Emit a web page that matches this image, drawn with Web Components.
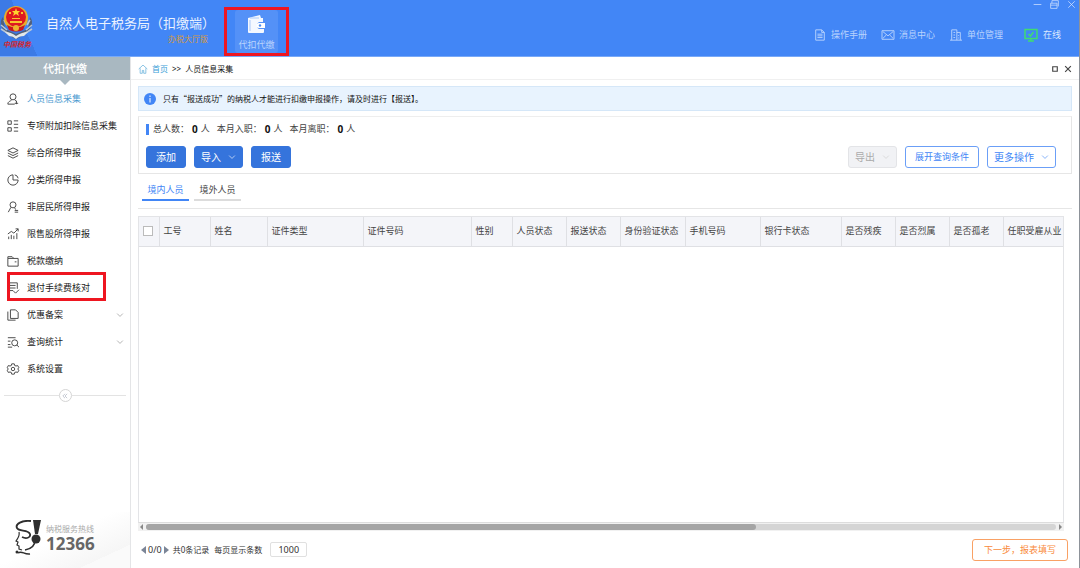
<!DOCTYPE html>
<html lang="zh-CN">
<head>
<meta charset="utf-8">
<title>自然人电子税务局（扣缴端）</title>
<style>
    html, body { height: 100%; margin: 0; }
    body {
        font: 9px/14px "Noto Sans", "Noto Sans CJK SC", sans-serif;
        color: #333;
        background: #fff;
        overflow: hidden;
    }
</style>
</head>
<body>
<tax-app></tax-app>

<script>
const ICONS = {
    person: '<circle cx="7" cy="4.5" r="3.5"/><path d="M5 8C5 10 1 9 1 13h8M9 8l2 2M11 9v4M9 12h4"/>',
    list: '<path d="M1 1h4v4H1zM1 9h4v4H1zM8 1h5M8 5h5M8 9h5M8 13h5"/>',
    layers: '<path d="M7 1l6 3-6 3-6-3zM1 7l6 3 6-3M1 10l6 3 6-3"/>',
    pie: '<path d="M7 1A6 6 0 1 0 13 7H7zM9 1A5 5 0 0 1 13 5"/>',
    foreign: '<circle cx="7" cy="4.5" r="3.5"/><path d="M4.5 7.5L1.5 13M9 8l1 2M9 11h4M9 13h4"/>',
    chart: '<path d="M2 13v-3M5 13V8M8 13V9M11.5 13V6M1 7l4-3 3 2 5-5M10 1h3v3"/>',
    folder: '<path d="M1 4h12v9H1zM1 4V2h5l2 2M9 8h2"/>',
    check: '<path d="M3 1h9v7M3 4h7M3 7h7M3 10h4M1 1h2v12M7 10l3 3 4-4"/>',
    copy: '<path d="M4 1h6l3 3v7H4zM1 3v10h9"/>',
    search: '<path d="M1 2h9M1 6h3M1 10h3M1 13h5"/><circle cx="9" cy="8" r="3.5"/><path d="M11.5 10.5L14 13"/>',
    gear: '<path d="M5.5 1h3l.5 2 1.500.5 2-.5 1.300 2.500L12.500 7l1.300 1.500-1.300 2.500-2-.5L9 11l-.5 2h-3L5 11l-1.500-.5-2 .5L.3 8.500 1.500 7 .3 5.500 1.500 3l2 .5L5 3z"/><circle cx="7" cy="7" r="2"/>',
    home: '<path d="M1 7l6-5.500L13 7M3 6v7h3V9h2v4h3V6"/>',
    doc: '<path d="M2 1h7l3 3v9H2zM9 1v3h3M4 6h6M4 8h6M4 10h6"/>',
    mail: '<path d="M0 2h14v10H0zM1 3l6 5 6-5M1 11l4-4M13 11L9 7"/>',
    building: '<path d="M2 13V1h6v12M8 4h4v9M0 13h14M4 4h2M4 7h2M4 10h2M10 7v1M10 10v1"/>',
    online: '<path d="M1 1.500h12v9H1zM4 13h6M7 11v2M4.500 6l2 2 3-4"/>',
    down: '<path d="M2 4.500l5 5 5-5"/>',
    collapse: '<path d="M7 2L2 7l5 5M12 2L7 7l5 5"/>',
    min: '<path d="M1 7h12"/>',
    restore: '<path d="M1 5h10v8H1zM3 5V1h10v9M1 8h10"/>',
    close: '<path d="M2 2l10 10M12 2L2 12"/>',
    square: '<path d="M3 3h8v8H3z"/>'
};

function define(name, html, setup) {
    customElements.define(name, class extends HTMLElement {
        constructor() {
            super();
            this.attachShadow({ mode: 'open' });
        }
        connectedCallback() {
            this.shadowRoot.innerHTML = typeof html === 'function' ? html(this) : html;
            if (setup) setup(this);
        }
    });
}

define('ui-icon', (el) => `
    <style>
        :host { display: inline-flex; flex: none; width: 12px; height: 12px; }
        svg { width: 100%; height: 100%; fill: none; stroke: currentColor; stroke-width: var(--stroke, 1.1); overflow: visible; }
    </style>
    <svg viewBox="0 0 14 14" aria-hidden="true">${ICONS[el.getAttribute('name')] || ''}</svg>
`);

define('tax-emblem', `
    <style>
        :host { display: flex; flex-direction: column; align-items: center; width: 34px; }
        svg { width: 34px; height: 35px; }
        span { font: italic bold 7px/9px "Noto Sans CJK SC", sans-serif; color: #d3262f; white-space: nowrap; }
    </style>
    <svg viewBox="0 0 34 35" aria-hidden="true">
        <path d="M3 12C-2 18 1 27 16 34C31 27 35 18 30 12L28 24L16 29L5 24z" fill="#51617c"/>
        <path d="M1 20l6 5M1 24l8 5M4 15l3 5M32 20l-6 5M32 24l-8 5M30 15l-3 5" stroke="#b9c6d6" stroke-width="1.5"/>
        <path d="M5 27q6 0 11 4q6-4 12-4l-4 4q-5 0-8 3q-3-3-7-3z" fill="#e3e7e9"/>
        <circle cx="16" cy="13" r="12" fill="#e7ad2c"/>
        <circle cx="16" cy="12" r="10" fill="#df1920"/>
        <path d="M16 3l1 3h3l-2 2 1 3-3-2-3 2 1-3-2-2h3z" fill="#ffd52e"/>
        <path d="M9 7h2v2H9zM21 7h2v2h-2zM12 13h8v1h-8zM10 16h12v2H10z" fill="#f8c52c"/>
        <path d="M7 20q9 5 18 0l-2 5q-7 3-14 0z" fill="#c9171e"/>
        <circle cx="16" cy="23" r="3" fill="#eeb22e"/>
    </svg>
    <span>中国税务</span>
`);

define('app-header', `
    <style>
        :host {
            display: flex; height: 57px; box-sizing: border-box; color: #b9d3fd;
            background: linear-gradient(65deg, #3c7ae6 0 34px, transparent 34px) #4286f6;
            border-bottom: 1px solid #78a9f8;
        }
        tax-emblem { margin-top: 5px; }
        .title { display: flex; flex-direction: column; padding: 13px 0 0 12px; width: 178px; box-sizing: border-box; white-space: nowrap; }
        h1 { margin: 0; font-size: 13px; line-height: 20px; font-weight: normal; color: #eaf2ff; }
        .edition { align-self: flex-end; font-size: 8px; line-height: 12px; color: #d39a3f; margin-right: 4px; }
        .mark { border: 3px solid #ee1620; margin: 7px 0 0 12px; box-sizing: border-box; width: 65px; height: 49px; display: flex; justify-content: center; }
        .tile {
            font: inherit; color: inherit; width: 43px; padding: 5px 0 0; border: 0; border-radius: 3px; background: #5491f7;
            display: flex; flex-direction: column; align-items: center; gap: 5px;
        }
        .tile svg { width: 19px; height: 18px; }
        .right { margin-left: auto; display: flex; flex-direction: column; align-items: flex-end; }
        .window { display: flex; gap: 8px; padding-right: 3px; height: 11px; color: #dce9ff; }
        .window button { border: 0; padding: 0; background: none; color: inherit; display: flex; }
        .window ui-icon { width: 9px; height: 9px; }
        nav { display: flex; gap: 15px; padding: 17px 18px 0 0; }
        a { display: flex; align-items: center; gap: 5px; color: inherit; text-decoration: none; }
        a.online { margin-left: 6px; color: #dce9ff; }
        a.online ui-icon { color: #3fdc72; width: 14px; height: 14px; --stroke: 1.5; }
    </style>
    <tax-emblem></tax-emblem>
    <div class="title">
        <h1>自然人电子税务局（扣缴端）</h1>
        <span class="edition">办税大厅版</span>
    </div>
    <div class="mark">
        <button class="tile">
            <svg viewBox="0 0 19 18" aria-hidden="true">
                <path d="M1 3l12-3 1 3h2v4h-4a4 4 0 0 0 0 7h5v3q0 1-1 1H2q-1 0-1-1z" fill="#f4f8ff"/>
                <path d="M3 3h9M3 5v11" stroke="#a9c8fa" fill="none"/>
                <path d="M12 8h6v5h-6a2.500 2.500 0 0 1 0-5z" fill="#fff"/>
                <circle cx="13" cy="10.500" r="1.200" fill="#4b89ed"/>
            </svg>
            <span>代扣代缴</span>
        </button>
    </div>
    <div class="right">
        <div class="window">
            <button aria-label="最小化"><ui-icon name="min"></ui-icon></button>
            <button aria-label="还原"><ui-icon name="restore"></ui-icon></button>
            <button aria-label="关闭"><ui-icon name="close"></ui-icon></button>
        </div>
        <nav>
            <a href="#"><ui-icon name="doc"></ui-icon>操作手册</a>
            <a href="#"><ui-icon name="mail"></ui-icon>消息中心</a>
            <a href="#"><ui-icon name="building"></ui-icon>单位管理</a>
            <a href="#" class="online"><ui-icon name="online"></ui-icon>在线</a>
        </nav>
    </div>
`);

define('nav-item', (el) => `
    <style>
        :host { display: block; position: relative; color: #222; }
        :host([active]) a { color: #4c9bd0; }
        a { display: flex; align-items: center; gap: 8px; height: 27px; padding: 0 6px 0 7px; color: inherit; text-decoration: none; white-space: nowrap; }
        ui-icon { color: #444; }
        .more { margin-left: auto; width: 8px; height: 8px; color: #888; }
        /* frame drawn over the item */
        :host([marked])::after {
            content: ""; position: absolute; inset: -2px 24px 0 7px; border: 3px solid #ee1620;
        }
    </style>
    <a href="#">
        <ui-icon name="${el.getAttribute('icon')}"></ui-icon>
        <slot></slot>
        ${el.hasAttribute('expandable') ? '<ui-icon class="more" name="down"></ui-icon>' : ''}
    </a>
`);

define('hot-line', `
    <style>
        :host {
            display: flex; align-items: center; gap: 4px; padding: 8px 0 12px 15px;
            background: linear-gradient(155deg, transparent 45%, #f6f6f6 80%, #fafafa 80%);
        }
        svg { width: 27px; height: 36px; }
        div { display: flex; flex-direction: column; color: #aaa; font-size: 8px; line-height: 12px; }
        b { font-size: 17px; line-height: 18px; color: #666; }
    </style>
    <svg viewBox="0 0 27 36" fill="none" stroke="#2e2e2e" aria-hidden="true">
        <path d="M16 1C7 0 0 4 2 8c2 4 11 1 13 6 1 4-4 5-8 3" stroke-width="1.800"/>
        <path d="M4 12c1 4-1 6-3 9l2 1-1 3 2 1v3l3 1" stroke-width="1.200"/>
        <path d="M20 20c0 6-4 9-10 10M3 33c4-3 6 2 12 1" stroke-width="1.500"/>
        <path d="M18 0h8l-3 14h-3z" fill="#2e2e2e" stroke="none"/>
        <circle cx="21" cy="19" r="4.500" fill="#2e2e2e" stroke="none"/>
        <circle cx="2" cy="32" r="1.500" fill="#2e2e2e" stroke="none"/>
    </svg>
    <div><span>纳税服务热线</span><b>12366</b></div>
`);

define('side-nav', `
    <style>
        :host { display: flex; flex-direction: column; width: 131px; flex: none; box-sizing: border-box; border-right: 1px solid #e4e5e7; }
        h2 { margin: 0; height: 23px; font-size: 11px; line-height: 23px; font-weight: 500; text-align: center; color: #fff; background: #a9b8c1; }
        .notch { align-self: center; height: 0; border: 5px solid transparent; border-top-color: #a9b8c1; border-bottom: 0; }
        .fold { display: flex; align-items: center; padding: 7px 4px 0; }
        .fold::before, .fold::after { content: ""; flex: 1; height: 1px; background: #e3e3e3; }
        .fold button { width: 13px; height: 13px; padding: 0; border: 1px solid #d5d5d5; border-radius: 50%; background: #fff; color: #8790a3; display: flex; align-items: center; justify-content: center; }
        .fold ui-icon { width: 6px; height: 6px; }
        hot-line { margin-top: auto; }
    </style>
    <h2>代扣代缴</h2>
    <div class="notch"></div>
    <nav>
        <nav-item icon="person" active>人员信息采集</nav-item>
        <nav-item icon="list">专项附加扣除信息采集</nav-item>
        <nav-item icon="layers">综合所得申报</nav-item>
        <nav-item icon="pie">分类所得申报</nav-item>
        <nav-item icon="foreign">非居民所得申报</nav-item>
        <nav-item icon="chart">限售股所得申报</nav-item>
        <nav-item icon="folder">税款缴纳</nav-item>
        <nav-item icon="check" marked>退付手续费核对</nav-item>
        <nav-item icon="copy" expandable>优惠备案</nav-item>
        <nav-item icon="search" expandable>查询统计</nav-item>
        <nav-item icon="gear">系统设置</nav-item>
    </nav>
    <div class="fold"><button aria-label="收起菜单"><ui-icon name="collapse"></ui-icon></button></div>
    <hot-line></hot-line>
`);

define('crumb-bar', `
    <style>
        :host { display: flex; align-items: center; gap: 4px; height: 20px; padding: 2px 7px 0; border-bottom: 1px solid #f0f0f0; font-size: 8px; color: #111; }
        a { display: flex; align-items: center; gap: 4px; color: #3aa0d8; text-decoration: none; }
        a ui-icon { width: 10px; height: 10px; color: #6db4dc; }
        .tools { margin-left: auto; display: flex; gap: 5px; }
        button { border: 0; padding: 0; background: none; display: flex; color: #444; }
        .tools ui-icon { width: 8px; height: 8px; --stroke: 2; }
    </style>
    <a href="#"><ui-icon name="home"></ui-icon>首页</a>
    <span>&gt;&gt;</span>
    <span>人员信息采集</span>
    <div class="tools">
        <button aria-label="最大化"><ui-icon name="square"></ui-icon></button>
        <button aria-label="关闭"><ui-icon name="close"></ui-icon></button>
    </div>
`);

define('info-notice', `
    <style>
        :host { display: flex; align-items: center; gap: 7px; height: 23px; padding: 0 5px; border: 1px solid #d5e7f8; background: #e8f3fe; font: 8px/14px "Noto Sans CJK SC", sans-serif; color: #111; }
        i { width: 12px; height: 12px; border-radius: 50%; background: #4286f6; flex: none; display: flex; }
        svg { width: 12px; height: 12px; }
    </style>
    <i><svg viewBox="0 0 12 12" stroke="#fff" aria-hidden="true"><path d="M6 2.500v1.500M6 5v4.500"/></svg></i>
    <span><slot></slot></span>
`);

define('ui-button', (el) => `
    <style>
        :host { display: inline-flex; }
        button {
            display: flex; align-items: center; justify-content: center; gap: 7px; height: 22px; padding: 0 9px;
            font: inherit; font-size: 10px; border: 1px solid #3574dc; border-radius: 3px; background: #3574dc; color: #fff; white-space: nowrap;
        }
        ui-icon { width: 8px; height: 8px; }
        :host([kind="outline"]) button { background: #fff; color: #4286f6; border-color: #6b9ff7; }
        :host([kind="accent"]) button { background: #fff; color: #f98a3c; border-color: #f9a165; padding: 0 11px; }
        :host([compact]) button { font-size: 9px; }
        :host([arrow]) button { padding: 0 6px; }
        button:disabled { background: #f1f2f5; color: #aaa; border-color: #e3e4e7; }
        button:disabled ui-icon { color: #ccc; }
    </style>
    <button ${el.hasAttribute('disabled') ? 'disabled' : ''}>
        <slot></slot>
        ${el.hasAttribute('arrow') ? '<ui-icon name="down"></ui-icon>' : ''}
    </button>
`);

define('people-panel', `
    <style>
        :host { display: flex; flex-direction: column; gap: 10px; border: 1px solid #e6e6e6; border-top-color: #eee; padding: 5px 15px 5px 7px; }
        .stats { display: flex; align-items: center; gap: 7px; color: #444; }
        .stats::before { content: ""; width: 3px; height: 11px; background: #4286f6; margin-right: -3px; }
        .stats span { display: flex; gap: 3px; font-family: "Noto Sans CJK SC", sans-serif; }
        b { font-family: "Noto Sans", sans-serif; font-size: 10px; color: #111; }
        .actions { display: flex; gap: 8px; }
        .push { margin-left: auto; }
    </style>
    <div class="stats">
        <span>总人数：<b>0</b>人</span>
        <span>本月入职：<b>0</b>人</span>
        <span>本月离职：<b>0</b>人</span>
    </div>
    <div class="actions">
        <ui-button>添加</ui-button>
        <ui-button arrow>导入</ui-button>
        <ui-button>报送</ui-button>
        <ui-button class="push" arrow disabled>导出</ui-button>
        <ui-button kind="outline" compact>展开查询条件</ui-button>
        <ui-button kind="outline" arrow>更多操作</ui-button>
    </div>
`);

define('tab-strip', `
    <style>
        :host { display: flex; gap: 5px; padding: 0 4px 7px; border-bottom: 1px solid #e6e6e6; }
        button { font: inherit; height: 20px; width: 47px; padding: 0; border: 0; border-bottom: 2px solid #dcdcdc; background: none; color: #444; white-space: nowrap; }
        button[aria-selected="true"] { color: #4286f6; border-color: #4286f6; }
    </style>
    <button role="tab" aria-selected="true">境内人员</button>
    <button role="tab" aria-selected="false">境外人员</button>
`, (el) => {
    const tabs = el.shadowRoot.querySelectorAll('button');
    tabs.forEach((tab) => tab.addEventListener('click', () => {
        tabs.forEach((t) => t.setAttribute('aria-selected', t === tab));
    }));
});

// the last column takes what is left of the width
const COLUMNS = [
    ['工号', '51px'], ['姓名', '57px'], ['证件类型', '96px'], ['证件号码', '108px'], ['性别', '41px'],
    ['人员状态', '54px'], ['报送状态', '54px'], ['身份验证状态', '65px'], ['手机号码', '75px'], ['银行卡状态', '81px'],
    ['是否残疾', '54px'], ['是否烈属', '54px'], ['是否孤老', '54px'], ['任职受雇从业', 'auto']
];

define('people-table', `
    <style>
        :host { display: flex; flex-direction: column; min-width: 0; }
        .view { flex: 1; overflow: hidden; border: 1px solid #e3e4e7; border-bottom-color: #ddd; }
        table { table-layout: fixed; width: 100%; min-width: 924px; border-collapse: collapse; }
        th { height: 29px; padding: 0 0 0 4px; box-sizing: border-box; text-align: left; font-weight: normal; color: #444; background: #f4f5f9; border: solid #dfe0e4; border-width: 0 1px 1px 0; white-space: nowrap; }
        th:last-child { border-right: 0; }
        input { appearance: none; display: block; width: 10px; height: 10px; margin: 0; border: 1px solid #bbb; background: #fff; }
        .scroll { display: flex; align-items: center; gap: 3px; height: 8px; background: #f1f1f1; padding: 0 2px; }
        .scroll::before, .scroll::after { content: ""; border: 3px solid transparent; border-right-color: #888; border-left-width: 0; }
        .scroll::after { border-left: 3px solid #888; border-right-width: 0; }
        .track { flex: 1; height: 6px; border-radius: 3px; background: #d5d5d5; }
        .thumb { width: 67%; height: 6px; border-radius: 3px; background: #a5a5a5; }
    </style>
    <div class="view">
        <table>
            <colgroup><col style="width: 20px">${COLUMNS.map((c) => `<col style="width: ${c[1]}">`).join('')}</colgroup>
            <thead><tr>
                <th><input type="checkbox" aria-label="全选"></th>
                ${COLUMNS.map((c) => `<th>${c[0]}</th>`).join('')}
            </tr></thead>
        </table>
    </div>
    <div class="scroll"><div class="track"><div class="thumb"></div></div></div>
`);

define('page-footer', `
    <style>
        :host { display: flex; align-items: center; gap: 5px; height: 37px; padding: 0 4px 0 3px; white-space: nowrap; }
        .pager { display: flex; align-items: center; gap: 2px; }
        .pager button { padding: 0; border: solid transparent; border-width: 4px 5px 4px 0; border-right-color: #7b8597; background: none; }
        .pager .next { border-width: 4px 0 4px 5px; border-color: transparent transparent transparent #7b8597; margin-right: 2px; }
        .total, label { font-size: 8px; }
        label { display: flex; align-items: center; gap: 8px; }
        input { font: inherit; font-size: 9px; color: #333; text-align: center; width: 37px; height: 15px; box-sizing: border-box; border: 1px solid #e0e0e0; border-radius: 2px; padding: 0; }
        ui-button { margin-left: auto; }
    </style>
    <div class="pager">
        <button aria-label="上一页"></button><span>0/0</span><button class="next" aria-label="下一页"></button>
        <span class="total">共0条记录</span>
    </div>
    <label>每页显示条数 <input value="1000"></label>
    <ui-button kind="accent" compact>下一步，报表填写</ui-button>
`);

define('tax-app', `
    <style>
        :host { display: flex; flex-direction: column; height: 100vh; box-sizing: border-box; border-right: 1px solid #8d9299; }
        .body { flex: 1; display: flex; min-height: 0; }
        main { flex: 1; min-width: 0; display: flex; flex-direction: column; }
        .page { flex: 1; display: flex; flex-direction: column; padding: 6px 7px 0; }
        people-panel { margin-top: 5px; }
        tab-strip { margin-top: 7px; }
        people-table { flex: 1; margin: 7px 8px 0 0; }
    </style>
    <app-header></app-header>
    <div class="body">
        <side-nav></side-nav>
        <main>
            <crumb-bar></crumb-bar>
            <div class="page">
                <info-notice>只有“报送成功”的纳税人才能进行扣缴申报操作，请及时进行【报送】。</info-notice>
                <people-panel></people-panel>
                <tab-strip></tab-strip>
                <people-table></people-table>
                <page-footer></page-footer>
            </div>
        </main>
    </div>
`);
</script>
</body>
</html>
